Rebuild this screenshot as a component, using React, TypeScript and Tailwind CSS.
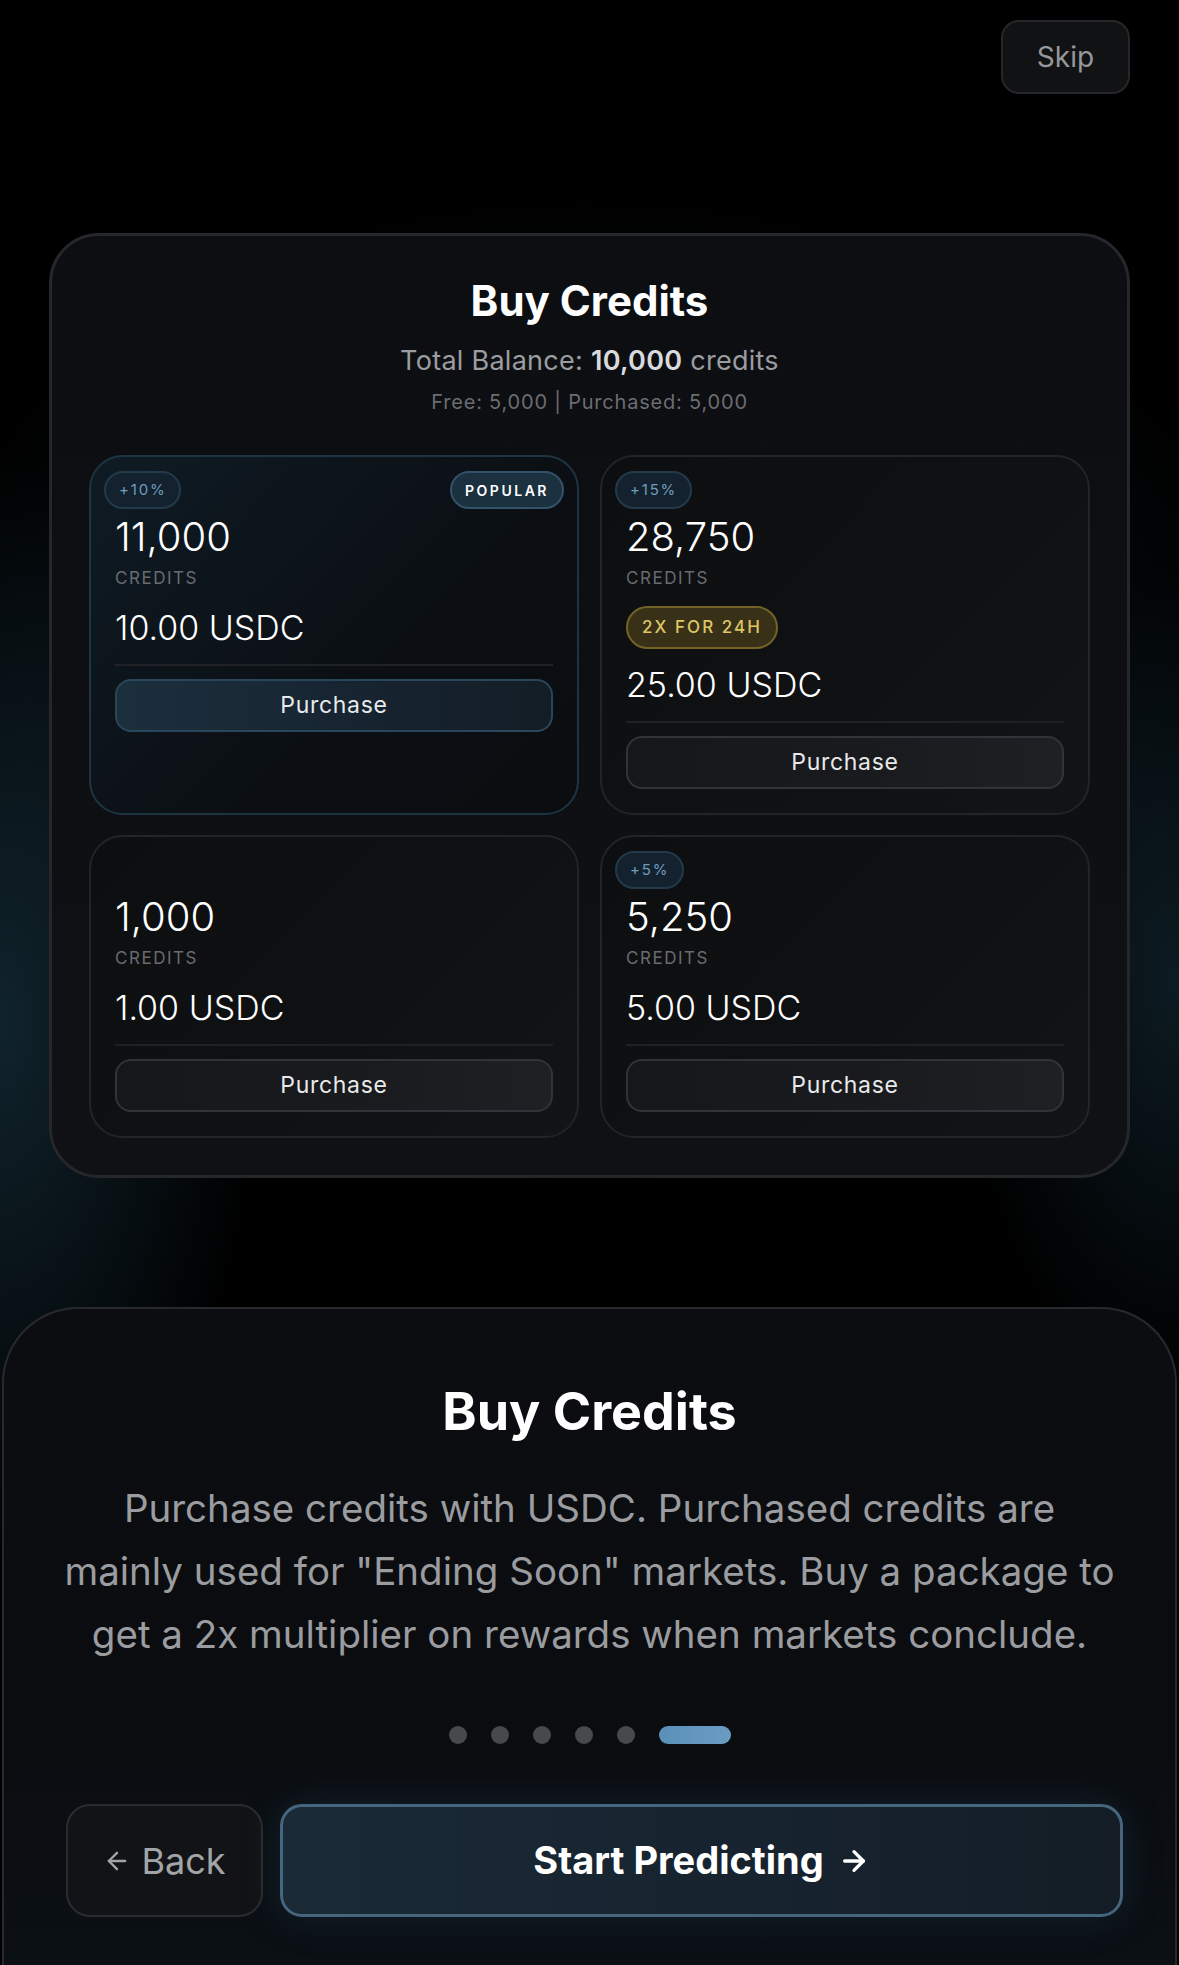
import { ArrowLeft, ArrowRight } from 'lucide-react';

interface CreditPackage {
  credits: string;
  price: string;
  bonus?: string;
  popular?: boolean;
  promo?: string;
}

const packages: CreditPackage[] = [
  { credits: '11,000', price: '10.00 USDC', bonus: '+10%', popular: true },
  { credits: '28,750', price: '25.00 USDC', bonus: '+15%', promo: '2X FOR 24H' },
  { credits: '1,000', price: '1.00 USDC' },
  { credits: '5,250', price: '5.00 USDC', bonus: '+5%' },
];

const description = [
  'Purchase credits with USDC. Purchased credits are',
  'mainly used for "Ending Soon" markets. Buy a package to',
  'get a 2x multiplier on rewards when markets conclude.',
];

function PackageCard({ pkg }: { pkg: CreditPackage }) {
  return (
    <div
      className={`relative flex flex-col rounded-[34px] px-[24px] pt-[56px] pb-[24px] border-2 ${
        pkg.popular
          ? 'border-[#1d3442] bg-[linear-gradient(135deg,#0f1b24_0%,#0b0f13_60%,#0b0d10_100%)]'
          : 'border-[#222428] bg-[linear-gradient(135deg,#0d0e10_0%,#101113_60%,#121416_100%)]'
      }`}
    >
      {/* Bonus badge */}
      {pkg.bonus && (
        <span className="absolute left-[13px] top-[14px] h-[38px] px-[13px] flex items-center rounded-full border-2 border-[#223a4b] bg-[#13222e] text-[15px] tracking-[0.12em] text-[#6f9dbd]">
          {pkg.bonus}
        </span>
      )}
      {pkg.popular && (
        <span className="absolute right-[13px] top-[14px] h-[38px] px-[13px] flex items-center rounded-full border-2 border-[#33526a] bg-[#1c3140] text-[14px] font-semibold tracking-[0.18em] text-white">
          POPULAR
        </span>
      )}

      <div className="text-[40px] leading-[48px] font-light text-white">{pkg.credits}</div>
      <div className="mt-[7px] text-[17px] leading-[20px] tracking-[0.09em] text-[#686b70]">CREDITS</div>

      {pkg.promo && (
        <span className="mt-[18px] self-start h-[43px] px-[14px] flex items-center rounded-full border-2 border-[#736327] bg-[#383117] text-[17px] font-medium tracking-[0.12em] text-[#dfc665]">
          {pkg.promo}
        </span>
      )}

      <div className={`${pkg.promo ? 'mt-[15px]' : 'mt-[19px]'} text-[34px] leading-[42px] font-light text-white`}>
        {pkg.price}
      </div>
      <div className="mt-[15px] h-[2px] bg-[#1f2125]" />
      <button
        className={`mt-[13px] h-[53px] rounded-[16px] border-2 text-[23px] tracking-[0.03em] text-[#e8e9eb] ${
          pkg.popular
            ? 'border-[#29465a] bg-[linear-gradient(90deg,#1c2f3d_0%,#172532_50%,#131d26_100%)]'
            : 'border-[#313338] bg-[linear-gradient(90deg,#161719_0%,#1a1b1e_60%,#1f2023_100%)]'
        }`}
      >
        Purchase
      </button>
    </div>
  );
}

export default function App() {
  return (
    <div className="min-h-[1965px] w-full flex flex-col bg-black font-['Inter','Noto_Sans',sans-serif] bg-[image:radial-gradient(ellipse_260px_560px_at_0%_52%,rgba(36,78,98,0.45),transparent),radial-gradient(ellipse_220px_420px_at_100%_50%,rgba(36,78,98,0.35),transparent),radial-gradient(ellipse_700px_500px_at_50%_35%,rgba(12,24,32,0.9),transparent)]">
      {/* Header */}
      <div className="flex justify-end pt-[20px] pr-[49px]">
        <button className="w-[129px] h-[74px] rounded-[18px] border-2 border-[#26272a] bg-[#111214] text-[28px] text-[#96979b]">
          Skip
        </button>
      </div>

      {/* Preview card */}
      <div className="mt-[139px] mx-[49px] rounded-[50px] border-[3px] border-[#25272b] bg-[linear-gradient(180deg,#0c0e11_0%,#0d0f12_50%,#101114_100%)] px-[37px] pt-[40px] pb-[37px]">
        <h2 className="text-center text-[42px] leading-[50px] font-bold text-white">Buy Credits</h2>
        <p className="mt-[18px] text-center text-[27px] leading-[34px] tracking-[0.01em] text-[#9b9da1]">
          Total Balance: <span className="font-semibold text-[#d9dadd]">10,000</span> credits
        </p>
        <p className="mt-[10px] text-center text-[20px] leading-[28px] tracking-[0.04em] text-[#6b6d72]">
          Free: 5,000 | Purchased: 5,000
        </p>

        <div className="mt-[39px] grid grid-cols-2 gap-x-[21px] gap-y-[20px]">
          {packages.map(pkg => (
            <PackageCard key={pkg.credits} pkg={pkg} />
          ))}
        </div>
      </div>

      {/* Bottom sheet */}
      <div className="mt-[129px] mx-[2px] flex-1 rounded-t-[76px] border-2 border-b-0 border-[#27292d] bg-[linear-gradient(180deg,#0b0d10_0%,#0a0c0f_60%,#0b1015_100%)] pt-[71px] pb-[47px] flex flex-col items-center">
        <h1 className="text-[52px] leading-[64px] font-bold text-white">Buy Credits</h1>
        <p className="mt-[33px] text-center text-[38.5px] leading-[63px] text-[#9a9ca0]">
          {description.map(line => (
            <span key={line} className="block whitespace-nowrap">{line}</span>
          ))}
        </p>

        {/* Progress dots */}
        <div className="mt-[60px] flex items-center gap-[24px]">
          {[0, 1, 2, 3, 4].map(i => (
            <span key={i} className="w-[18px] h-[18px] rounded-full bg-[#48494d]" />
          ))}
          <span className="w-[72px] h-[18px] rounded-full bg-[linear-gradient(90deg,#5a90b8,#6a9cc2)]" />
        </div>

        {/* Actions */}
        <div className="mt-[60px] w-full flex gap-[17px] pl-[62px] pr-[52px]">
          <button className="w-[197px] h-[113px] shrink-0 flex items-center justify-center gap-[10px] rounded-[24px] border-2 border-[#2a2b2f] bg-[#121316] text-[36px] text-[#a3a4a8]">
            <ArrowLeft size={28} strokeWidth={2} />
            Back
          </button>
          <button className="flex-1 h-[113px] flex items-center justify-center gap-[14px] rounded-[22px] border-[3px] border-[#46667e] bg-[linear-gradient(90deg,#1a2a37_0%,#172430_50%,#141d26_100%)] text-[38px] font-bold text-white shadow-[0_0_40px_rgba(50,100,140,0.22)]">
            Start Predicting
            <ArrowRight size={32} strokeWidth={2.5} />
          </button>
        </div>
      </div>
    </div>
  );
}
